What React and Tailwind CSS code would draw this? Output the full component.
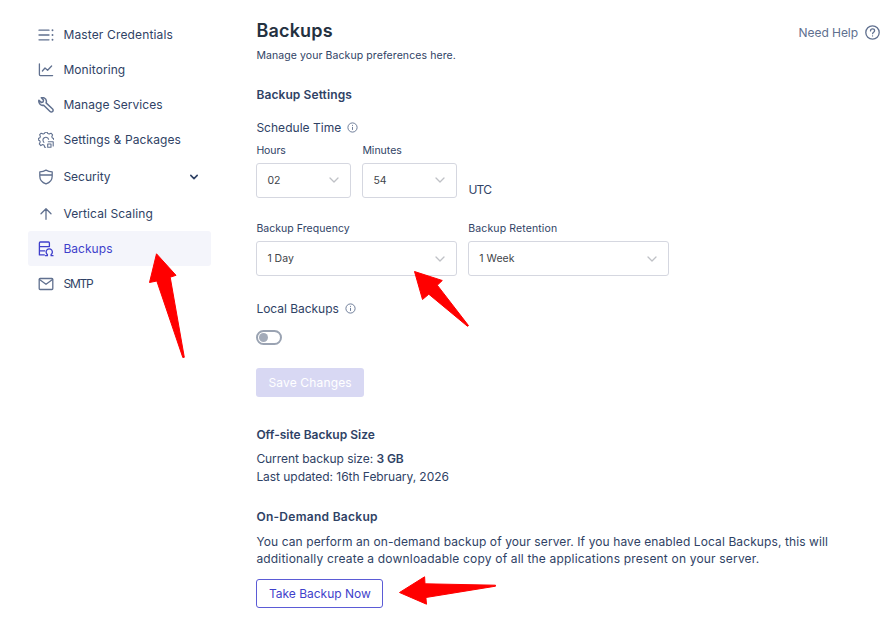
import React from 'react';

const stroke = { fill: 'none', stroke: 'currentColor', strokeWidth: 1.3, strokeLinecap: 'round', strokeLinejoin: 'round' };

function Icon({ children }) {
  return (
    <svg className="h-4 w-4 shrink-0" viewBox="0 0 16 16" {...stroke}>
      {children}
    </svg>
  );
}

const icons = {
  credentials: (
    <Icon>
      <path d="M1 3.2h10M1 8h10M1 12.8h10" />
      <path d="M14.5 3.2h.01M14.5 8h.01M14.5 12.8h.01" strokeWidth="1.9" />
    </Icon>
  ),
  monitoring: (
    <Icon>
      <path d="M1.4 2v10.6c0 .6.4 1 1 1h12.2" />
      <path d="M4.4 9 7 6l2.6 2.2L13.6 4" />
    </Icon>
  ),
  services: (
    <Icon>
      <path d="M.9 3.2 3.2 5.4l1.9-.5.4-1.8L3.3.8c2.2-.6 4.6.4 5 2.8.2.9.1 1.6-.2 2.3l6.5 6.1a1.75 1.75 0 0 1-2.5 2.5L5.7 8.2C3.1 9 .2 6.5.9 3.2Z" strokeWidth="1.5" />
    </Icon>
  ),
  settings: (
    <Icon>
      <path d="M7.6 15.3H6.7l-.6-2.1-1.3-.6-2 1-1.5-1.7.9-2-.5-1.3-1.4-.7V6.6l1.6-.8.5-1.2-.7-1.9 1.5-1.5 2 .8 1.2-.5.8-1.2h1.9l.7 1.3 1.3.5 1.9-.9 1.6 1.6-.8 1.9.5 1.2 1.4.6v1" strokeWidth="1.1" />
      <path d="M5.9 10.3a2.9 2.9 0 1 1 4.7-3M10.3 9.7h4.9v4.2M9.7 12h3.3v3.3H9.7Z" strokeWidth="1.1" />
    </Icon>
  ),
  security: (
    <Icon>
      <path d="M8 1.1c1.9 1.1 4 1.6 6.2 1.7v4.4c0 3.8-2.3 6.3-6.2 7.7-3.9-1.4-6.2-3.9-6.2-7.7V2.8C4 2.7 6.1 2.2 8 1.1ZM1.9 6h12.2" />
    </Icon>
  ),
  scaling: (
    <Icon>
      <path d="M8 13.3V3.1M3 7.8l5-5 5 5" />
    </Icon>
  ),
  backups: (
    <Icon>
      <path d="M6.3 13.9H1.4V1.9c0-.5.4-.9.9-.9h8.2c.5 0 .9.4.9.9v3.7H1.4M1.4 9.9h5.3" />
      <path d="M7.5 14.7h1.9v-1.2a3.1 3.1 0 1 1 3.7 0v1.2H15" />
    </Icon>
  ),
  smtp: (
    <Icon>
      <rect x="1.2" y="2.5" width="13.6" height="11" rx=".9" />
      <path d="m1.5 3.5 6.5 4.8 6.5-4.8" />
    </Icon>
  ),
};

const navItems = [
  { id: 'credentials', label: 'Master Credentials', track: 'tracking-[0.15px]' },
  { id: 'monitoring', label: 'Monitoring', track: 'tracking-[0.08px]' },
  { id: 'services', label: 'Manage Services', track: 'tracking-[0.06px]' },
  { id: 'settings', label: 'Settings & Packages', track: 'tracking-[0.1px]' },
  { id: 'security', label: 'Security', track: 'tracking-[0px]', expandable: true },
  { id: 'scaling', label: 'Vertical Scaling', track: 'tracking-[0.1px]' },
  { id: 'backups', label: 'Backups', track: 'tracking-[0.05px]', active: true },
  { id: 'smtp', label: 'SMTP', track: 'tracking-[-1.2px]' },
];

function Sidebar() {
  return (
    <nav className="ml-[28.4px] w-[182.6px] shrink-0 pt-[18px]">
      {navItems.map((item) => (
        <a
          key={item.id}
          className={`flex items-center rounded-[3px] pl-2.5 ${item.expandable ? 'h-[39px]' : 'h-[34.9px]'} ${item.active ? 'bg-[#f4f5fb] text-[#3f3fcb]' : 'text-[#60708f]'}`}
        >
          {icons[item.id]}
          <span className={`ml-[9px] text-[12px] ${item.track} ${item.active ? '' : 'text-[#2f4265]'}`}>{item.label}</span>
          {item.expandable && (
            <svg className="mr-3 ml-auto h-2.5 w-2.5 text-[#2f4265]" viewBox="0 0 10 10" {...stroke} strokeWidth="1.6">
              <path d="m1.8 3.4 3.2 3.2 3.2-3.2" />
            </svg>
          )}
        </a>
      ))}
    </nav>
  );
}

function InfoIcon() {
  return (
    <svg className="-mt-px h-[11px] w-[11px]" viewBox="0 0 11 11" fill="none" stroke="#60708f" strokeWidth="0.9">
      <circle cx="5.5" cy="5.5" r="4.6" />
      <path d="M5.5 4.9v3M5.5 2.9v1" />
    </svg>
  );
}

function Select({ label, value, width, track }) {
  return (
    <div className={width}>
      <div className={`h-4 text-[10.5px] leading-4 whitespace-nowrap ${track}`}>{label}</div>
      <div className="mt-1 flex h-[35px] items-center justify-between rounded-[3px] border border-[#d5d7e0] pr-[11px] pl-2.5 text-[10.5px] text-[#414449]">
        <span>{value}</span>
        <svg className="h-2.5 w-2.5" viewBox="0 0 10 10" {...stroke} stroke="#bfc1c6">
          <path d="m1 3 4 4 4-4" />
        </svg>
      </div>
    </div>
  );
}

function Arrow({ className, viewBox, d }) {
  return (
    <svg className={`absolute ${className}`} viewBox={viewBox} fill="#ff0000" stroke="#ff0000" strokeWidth="1" strokeLinejoin="round">
      <path d={d} />
    </svg>
  );
}

export default function App() {
  return (
    <div className="relative flex h-[621px] w-[884px] overflow-hidden bg-white font-['Inter',sans-serif] text-[12px] text-[#2f4265]">
      <Sidebar />
      <main className="ml-[45.4px] w-[600px] shrink-0 pt-[19px]">
        <h1 className="h-6 text-[18px] leading-6 font-semibold tracking-[0.2px] text-[#24313f]">Backups</h1>
        <p className="mt-[4.6px] h-4 text-[10.5px] leading-4 tracking-[0.09px]">Manage your Backup preferences here.</p>

        <h2 className="mt-[22.4px] h-[18px] leading-[18px] font-semibold tracking-[0.1px]">Backup Settings</h2>
        <div className="mt-[15px] flex h-[18px] items-center gap-1.5">
          <span className="tracking-[0.03px]">Schedule Time</span>
          <InfoIcon />
        </div>
        <div className="mt-1.5 flex items-end">
          <Select label="Hours" value="02" width="w-[95px]" track="tracking-[-0.1px]" />
          <Select label="Minutes" value="54" width="ml-[11px] w-[95px]" track="" />
          <span className="ml-[11px] leading-[17px] tracking-[-0.7px]">UTC</span>
        </div>
        <div className="mt-[23.4px] flex gap-[11.4px]">
          <Select label="Backup Frequency" value="1 Day" width="w-[200.6px]" track="tracking-[0.05px]" />
          <Select label="Backup Retention" value="1 Week" width="w-[200.6px]" track="tracking-[0.12px]" />
        </div>

        <div className="mt-[23.2px] flex h-[18px] items-center gap-1.5">
          <span className="tracking-[-0.03px]">Local Backups</span>
          <InfoIcon />
        </div>
        <div className="mt-[12.4px] flex h-[15px] w-[26px] items-center rounded-full border-2 border-[#9aa3b2] pl-px">
          <span className="h-[9px] w-[9px] rounded-full bg-[#a3abb9]" />
        </div>
        <button className="mt-[23px] block h-[29px] w-[107.5px] rounded-[3px] bg-[#d8d8f3] pt-px tracking-[0.15px] whitespace-nowrap text-white">Save Changes</button>

        <h2 className="mt-[28.6px] h-[18px] leading-[18px] font-semibold">Off-site Backup Size</h2>
        <div className="mt-[6.6px] leading-[17.5px]">
          <p className="tracking-[-0.06px]">Current backup size: <b className="font-semibold">3 GB</b></p>
          <p className="tracking-[-0.05px]">Last updated: 16th February, 2026</p>
        </div>

        <h2 className="mt-[22.8px] h-[18px] leading-[18px] font-semibold tracking-[0.28px]">On-Demand Backup</h2>
        <div className="mt-[6.6px] leading-[17.5px] whitespace-nowrap">
          <p className="tracking-[0.1px]">You can perform an on-demand backup of your server. If you have enabled Local Backups, this will</p>
          <p className="tracking-[0.18px]">additionally create a downloadable copy of all the applications present on your server.</p>
        </div>
        <button className="mt-[11.8px] block h-[29px] w-[127px] rounded-[3px] border border-[#5b5bd6] whitespace-nowrap text-[#3f3fcb]">Take Backup Now</button>
      </main>

      <div className="absolute top-[23.5px] right-1 flex h-[18px] items-center gap-[7px] text-[#60708f]">
        <span className="tracking-[-0.06px]">Need Help</span>
        <svg className="h-[15px] w-[15px]" viewBox="0 0 15 15" {...stroke}>
          <circle cx="7.5" cy="7.5" r="6.7" />
          <path d="M5.5 5.9c0-1.2.9-2 2.1-2s2 .8 2 1.8c0 1.5-2 1.5-2 3M7.55 10.9h.01" />
        </svg>
      </div>

      <Arrow className="top-[250px] left-[145px] h-[110px] w-[42px]" viewBox="145 250 42 110" d="M156.5 253.8 176 275.3 170.2 277.2 184.3 357.3 182.8 357.5 156.8 281 149.5 282.5Z" />
      <Arrow className="top-[268px] left-[410px] h-[62px] w-[62px]" viewBox="410 268 62 62" d="M414.5 271.5 442.3 280.5 437.3 285.2 468.5 325.6 467.5 326.3 428.8 294.2 422.5 299.5Z" />
      <Arrow className="top-[573px] left-[396px] h-[35px] w-[104px]" viewBox="396 573 104 35" d="M399.5 592.5 424.6 576.8 425 583.8 495.5 585.2V586.2L425.9 597.5 426.5 604.2Z" />
    </div>
  );
}
